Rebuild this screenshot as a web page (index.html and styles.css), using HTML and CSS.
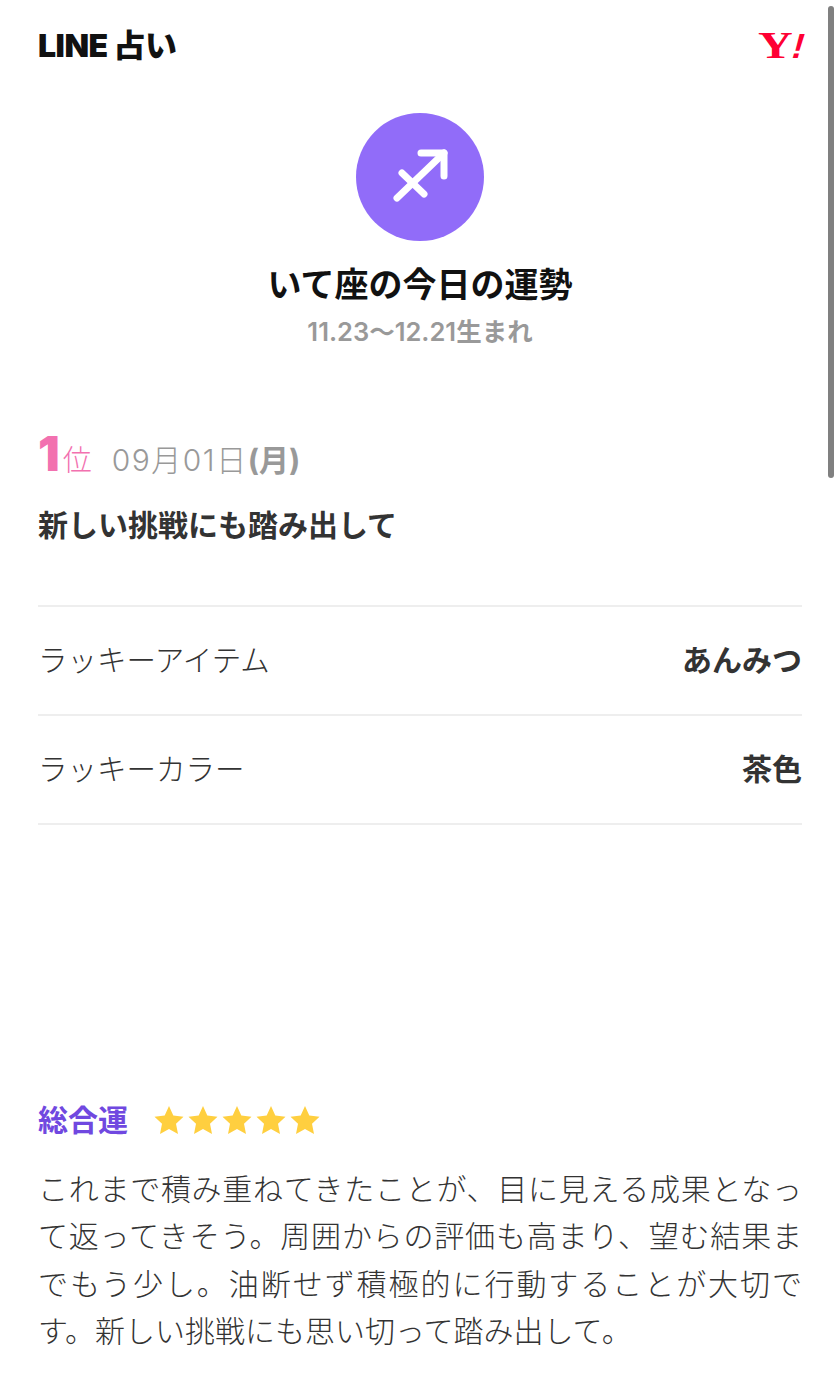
FILE: index.html
```html
<!DOCTYPE html>
<html lang="ja">
<head>
<meta charset="utf-8">
<title>いて座の今日の運勢</title>
<link rel="stylesheet" href="styles.css">
</head>
<body>
<div class="page">
  <header class="top">
    <div class="brand">LINE 占い</div>
    <div class="yahoo"><span class="yahoo-y">Y</span><span class="yahoo-x">!</span></div>
  </header>
  <section class="hero">
    <div class="sign">
      <svg width="128" height="128" viewBox="0 0 128 128" fill="none" stroke="#fff" stroke-width="7" stroke-linecap="round" stroke-linejoin="round"><path d="M41 85 88 40"/><path d="M65 40H88V63"/><path d="M46 60 68 81"/></svg>
    </div>
    <h1 class="title">いて座の今日の運勢</h1>
    <p class="dates">11.23〜12.21生まれ</p>
  </section>
  <section class="rank">
    <div class="rank-line"><span class="num">1</span><span class="pos">位</span><span class="date">09月01日<b>(月)</b></span></div>
    <p class="lead">新しい挑戦にも踏み出して</p>
  </section>
  <dl class="lucky">
    <div class="row"><dt>ラッキーアイテム</dt><dd>あんみつ</dd></div>
    <div class="row"><dt>ラッキーカラー</dt><dd>茶色</dd></div>
  </dl>
  <section class="luck">
    <div class="luck-head">
      <h2>総合運</h2>
      <div class="stars">
        <svg class="star" viewBox="0 0 30 30"><path d="M15 1 19.300 10.600 29.500 11.800 22 18.800 24 29 15 24 6 29 8 18.800 .5 11.800 10.700 10.600Z"/></svg>
        <svg class="star" viewBox="0 0 30 30"><path d="M15 1 19.300 10.600 29.500 11.800 22 18.800 24 29 15 24 6 29 8 18.800 .5 11.800 10.700 10.600Z"/></svg>
        <svg class="star" viewBox="0 0 30 30"><path d="M15 1 19.300 10.600 29.500 11.800 22 18.800 24 29 15 24 6 29 8 18.800 .5 11.800 10.700 10.600Z"/></svg>
        <svg class="star" viewBox="0 0 30 30"><path d="M15 1 19.300 10.600 29.500 11.800 22 18.800 24 29 15 24 6 29 8 18.800 .5 11.800 10.700 10.600Z"/></svg>
        <svg class="star" viewBox="0 0 30 30"><path d="M15 1 19.300 10.600 29.500 11.800 22 18.800 24 29 15 24 6 29 8 18.800 .5 11.800 10.700 10.600Z"/></svg>
      </div>
    </div>
    <p class="body">これまで積み重ねてきたことが、目に見える成果となって返ってきそう。周囲からの評価も高まり、望む結果までもう少し。油断せず積極的に行動することが大切です。新しい挑戦にも思い切って踏み出して。</p>
  </section>
</div>
<div class="scroll"></div>
</body>
</html>
```
FILE: styles.css
```css
* { box-sizing: border-box; }
html, body { margin: 0; padding: 0; }
body { background: #fff; color: #111; font-family: "Inter", "Noto Sans CJK JP", sans-serif; height: 1387px; overflow: hidden; }
.page { padding: 0 38px; }
.top { display: flex; justify-content: space-between; align-items: center; height: 92px; }
.brand { font-size: 32px; font-weight: 900; letter-spacing: -0.5px; line-height: 40px; color: #111; }
.yahoo { display: flex; align-items: baseline; font-family: "Liberation Serif", serif; font-weight: 700; font-size: 37px; line-height: 40px; margin-right: -3px; color: #ff0033; }
.yahoo-y { display: inline-block; transform: scaleX(1.3); transform-origin: right center; }
.yahoo-x { display: inline-block; font-family: "Liberation Sans", sans-serif; font-size: 35px; transform: skewX(-16deg); margin-left: 1px; }
.hero { display: flex; flex-direction: column; align-items: center; padding-top: 21px; }
.sign { width: 128px; height: 128px; border-radius: 50%; background: #916cf9; }
.sign svg { display: block; }
.title { margin: 21px 0 0; font-size: 34px; line-height: 46px; font-weight: 700; color: #111; }
.dates { margin: 9px 0 0; font-size: 25.5px; line-height: 30px; font-weight: 600; color: #999; }
.rank { margin-top: 80px; }
.rank-line { display: flex; align-items: baseline; height: 54px; }
.num { font-size: 48px; font-weight: 900; color: #f271b0; line-height: 54px; }
.pos { font-size: 29px; color: #f271b0; font-weight: 300; margin-left: 3px; }
.date { font-size: 30px; color: #999; margin-left: 20px; font-weight: 300; letter-spacing: 1.5px; }
.date b { font-weight: 700; letter-spacing: 0; }
.lead { margin: 23px 0 0; font-size: 30px; line-height: 42px; font-weight: 700; color: #333; }
.lucky { margin: 59px 0 0; border-top: 2px solid #eee; }
.row { display: flex; justify-content: space-between; align-items: center; height: 109px; padding-bottom: 6px; border-bottom: 2px solid #eee; }
.row dt { font-size: 29.5px; font-weight: 300; color: #333; }
.row dd { margin: 0; font-size: 30px; font-weight: 700; color: #333; }
.luck { margin-top: 273px; }
.luck-head { display: flex; align-items: center; gap: 26px; }
.luck-head h2 { margin: 0; font-size: 30px; line-height: 44px; font-weight: 700; color: #7048e0; }
.stars { display: flex; gap: 4px; }
.star { width: 30px; height: 30px; fill: #ffcf3f; display: block; }
.body { margin: 24px 0 0; font-size: 30px; line-height: 47.4px; font-weight: 300; color: #333; text-align: justify; }
.scroll { position: absolute; right: 6px; top: 6px; width: 6px; height: 472px; background: #808080; border-radius: 3px; }
```
